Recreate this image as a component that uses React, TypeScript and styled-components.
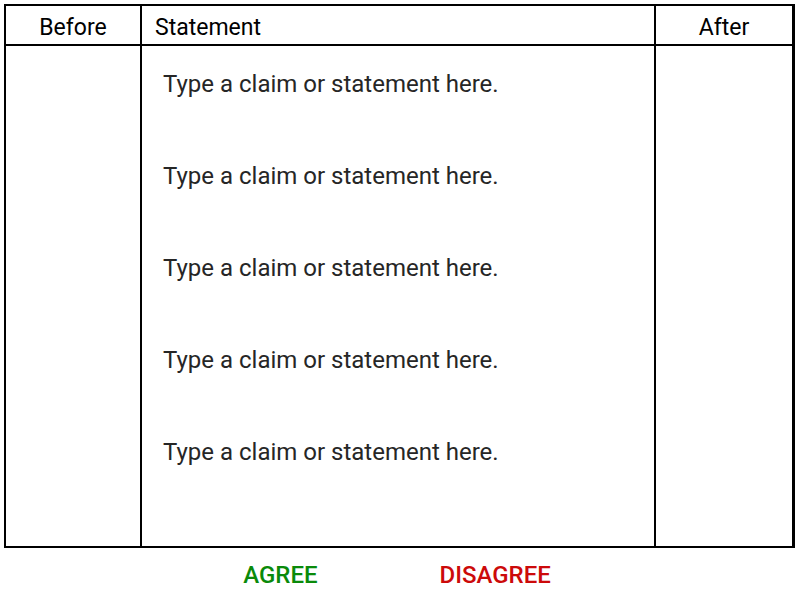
import styled, { createGlobalStyle } from "styled-components";

const GlobalStyle = createGlobalStyle`
  body {
    margin: 0;
    background: #ffffff;
    font-family: Roboto, "Liberation Sans", sans-serif;
  }
`;

const Page = styled.div`
  width: 800px;
  height: 600px;
  padding: 4px 5px 0 4px;
  box-sizing: border-box;
  display: flex;
  flex-direction: column;
`;

const Table = styled.div`
  display: grid;
  grid-template-columns: 136px 1fr 136px;
  grid-template-rows: 40px 500px;
  border: 2px solid #000;
  border-right-width: 3px;
`;

const HeadCell = styled.div<{ $align: "left" | "center"; $last?: boolean }>`
  display: flex;
  align-items: center;
  justify-content: ${(p) => (p.$align === "center" ? "center" : "flex-start")};
  padding: 4px 0 0 ${(p) => (p.$align === "left" ? "13px" : "0")};
  border-right: ${(p) => (p.$last ? "none" : "2px solid #000")};
  border-bottom: 2px solid #000;
  font-size: 23px;
  color: #000;
`;

const BodyCell = styled.div<{ $last?: boolean }>`
  border-right: ${(p) => (p.$last ? "none" : "2px solid #000")};
`;

const Statements = styled.div`
  display: flex;
  flex-direction: column;
  gap: 64px;
  padding: 24px 0 0 21px;
  border-right: 2px solid #000;
`;

const Statement = styled.div`
  font-size: 24px;
  line-height: 28px;
  color: #262626;
`;

const Legend = styled.div`
  display: flex;
  justify-content: center;
  gap: 122px;
  padding-top: 13px;
  padding-right: 5px;
`;

const Choice = styled.span<{ $color: string }>`
  font-size: 24px;
  line-height: 28px;
  font-weight: 500;
  color: ${(p) => p.$color};
`;

const statements = Array.from({ length: 5 }, () => "Type a claim or statement here.");

export default function App() {
  return (
    <>
      <GlobalStyle />
      <Page>
        <Table>
          <HeadCell $align="center">Before</HeadCell>
          <HeadCell $align="left">Statement</HeadCell>
          <HeadCell $align="center" $last>
            After
          </HeadCell>
          <BodyCell />
          <Statements>
            {statements.map((text, i) => (
              <Statement key={i}>{text}</Statement>
            ))}
          </Statements>
          <BodyCell $last />
        </Table>
        <Legend>
          <Choice $color="#0a8a0a">AGREE</Choice>
          <Choice $color="#cc0a0a">DISAGREE</Choice>
        </Legend>
      </Page>
    </>
  );
}
